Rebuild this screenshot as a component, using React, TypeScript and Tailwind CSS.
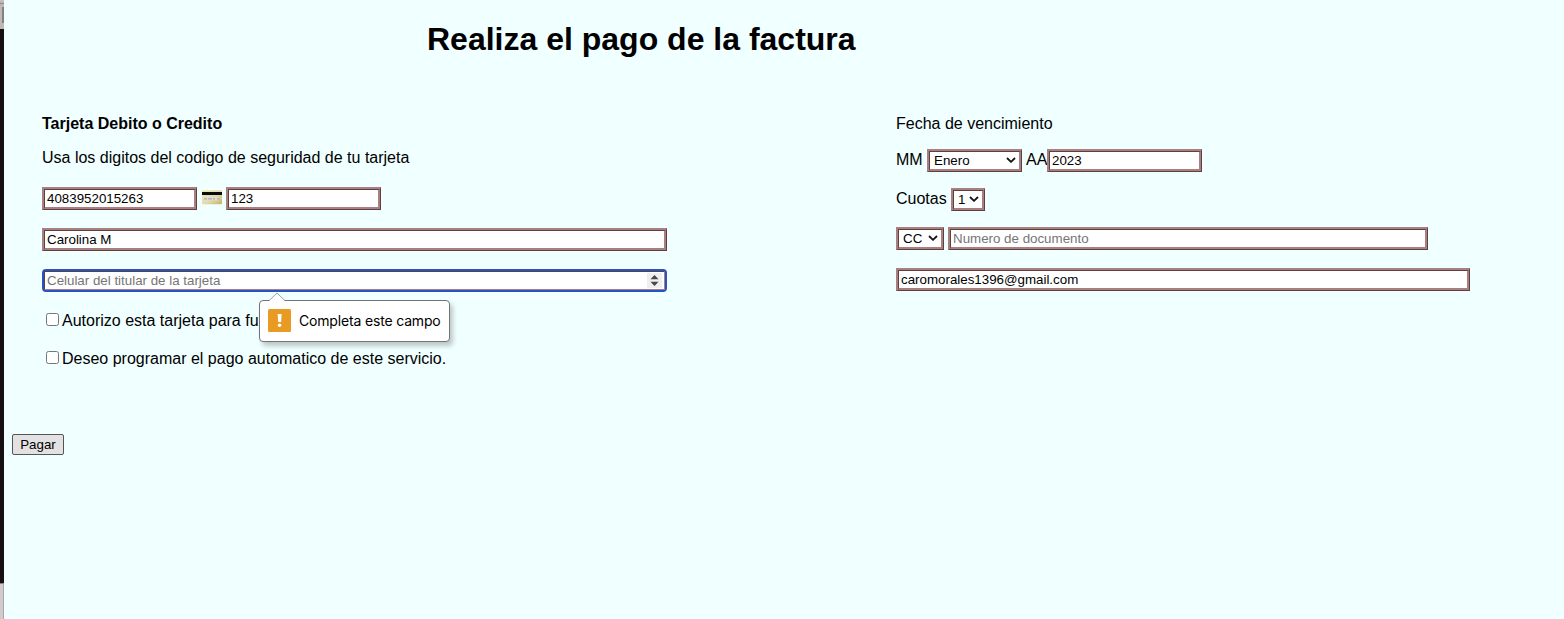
import type { ReactNode } from "react";

function Field({ className, children }: { className: string; children?: ReactNode }) {
  return (
    <div
      className={`h-[23px] shrink-0 border-t-2 border-l-2 border-r border-b border-t-[#a97f7f] border-l-[#a97f7f] border-r-[#5d4141] border-b-[#5d4141] ${className}`}
    >
      <div className="flex h-full items-center border-t border-l border-r-2 border-b-2 border-t-[#5d4141] border-l-[#5d4141] border-r-[#a97f7f] border-b-[#a97f7f] bg-white pl-[2px] text-[13.33px] leading-[15px] whitespace-nowrap">
        {children}
      </div>
    </div>
  );
}

function Chevron() {
  return (
    <svg className="-mt-px h-[6px] w-[10px] shrink-0" viewBox="0 0 10 6" fill="none" stroke="#111" strokeWidth="1.8">
      <path d="M1 1 L5 4.8 L9 1" />
    </svg>
  );
}

function CardIcon() {
  return (
    <svg className="h-[15px] w-[20px]" viewBox="0 0 20 15">
      <defs>
        <linearGradient id="card" x1="0" y1="0" x2="1" y2="1">
          <stop offset="0" stopColor="#f1e6b4" />
          <stop offset="0.55" stopColor="#e6dbaa" />
          <stop offset="1" stopColor="#c9b16c" />
        </linearGradient>
      </defs>
      <rect width="20" height="14" y="0.2" rx="0.8" fill="url(#card)" />
      <rect width="20" height="3" y="2" fill="#0b0b0b" />
      <rect x="1.5" y="7" width="15" height="3.4" fill="#dedfd3" />
      <path d="M2 8.8h3M6 8.8h4M11 8.8h2M15 8.8h2" stroke="#a5adc0" strokeWidth="1.2" />
    </svg>
  );
}

function Check() {
  return <span className="mr-[3px] mb-[2px] ml-[4px] size-[13px] shrink-0 rounded-[2.5px] border border-[#767676] bg-white" />;
}

export default function App() {
  return (
    <div className="flex h-[619px] w-[1564px] overflow-hidden bg-[#f0ffff] font-['Liberation_Sans',Arial,sans-serif] text-[16px] leading-[18px] text-black">
      <div className="flex w-1 shrink-0 flex-col bg-[#141011]">
        <div className="flex h-[29px] flex-col items-end border-t border-[#c9c5c1] bg-[#bdb9b5]">
          <div className="mt-[2px] h-px w-full bg-[#8d8987]" />
          <div className="mt-[3px] h-4 w-[2px] bg-[#858183]" />
        </div>
        <div className="grow" />
        <div className="h-9 border-t border-r border-t-[#858183] border-r-[#aaa7a7] bg-[#cfcccb]" />
      </div>
      <div className="flex grow flex-col">
        <h1 className="mt-[21px] ml-[423px] h-[38px] text-[32px] leading-[37px] font-bold whitespace-nowrap">
          Realiza el pago de la factura
        </h1>
        <div className="mt-[56px] flex h-[319px] pl-[38px]">
          <section className="w-[854px] shrink-0">
            <h2 className="h-[18px] font-bold">Tarjeta Debito o Credito</h2>
            <p className="mt-4 h-[18px]">Usa los digitos del codigo de seguridad de tu tarjeta</p>
            <div className="mt-5 flex">
              <Field className="w-[155px]">4083952015263</Field>
              <div className="ml-[5px] w-[20px] pt-[3px]"><CardIcon /></div>
              <Field className="ml-1 w-[155px]">123</Field>
            </div>
            <Field className="mt-[18px] w-[625px]">Carolina M</Field>
            <div className="relative mt-[18px] h-[23px] w-[625px] rounded-[4px] border-2 border-[#2753c4] bg-[#2753c4]">
              <div className="flex h-[19px] items-center justify-between border border-t-[#5d4141] border-l-[#5d4141] border-r-[#a97f7f] border-b-[#a97f7f] bg-white pr-[2px] pl-[2px] text-[13.33px] leading-[15px] text-[#757575]">
                <span>Celular del titular de la tarjeta</span>
                <svg className="h-[15px] w-[15px]" viewBox="0 0 15 15">
                  <rect width="15" height="15" fill="#efefef" />
                  <path d="M3.5 6.3 7.5 2 11.5 6.3ZM3.5 8.7h8L7.5 13Z" fill="#484848" />
                </svg>
              </div>
              <div className="absolute top-[29px] left-[215px] flex h-[42px] w-[191px] items-center rounded-[4px] border border-[#747474] bg-white pl-[8px] shadow-[3px_4px_5px_rgba(0,0,0,0.22)]">
                <svg className="absolute -top-[9px] left-[8px] h-[10px] w-[18px]" viewBox="0 0 18 10">
                  <path d="M1 9 9 1 17 9V10H1Z" fill="white" />
                  <path d="M1 8.7 9 1 17 8.7" fill="none" stroke="#a0a0a0" />
                </svg>
                <svg className="-mt-px h-[23px] w-[23px] shrink-0" viewBox="0 0 23 23">
                  <rect width="23" height="23" rx="1.5" fill="#e99a22" />
                  <path d="M9.6 5h4l-.5 8h-3Z" fill="white" />
                  <circle cx="11.6" cy="16.2" r="1.8" fill="white" />
                </svg>
                <span className="ml-2 font-[Inter,sans-serif] text-[14px] leading-4 tracking-[-0.17px] whitespace-nowrap">Completa este campo</span>
              </div>
            </div>
            <div className="mt-[19px] flex h-[19px] items-center">
              <Check />
              <span>Autorizo esta tarjeta para fu</span>
            </div>
            <div className="mt-[19px] flex h-[19px] items-center">
              <Check />
              <span>Deseo programar el pago automatico de este servicio.</span>
            </div>
          </section>
          <section className="w-[600px]">
            <p className="h-[18px]">Fecha de vencimiento</p>
            <div className="mt-4 flex">
              <span className="w-[31px] pt-[2px]">MM</span>
              <Field className="w-[95px]">
                <span className="ml-[2px] w-[72px]">Enero</span>
                <Chevron />
              </Field>
              <span className="ml-[4px] w-[21px] pt-[2px]">AA</span>
              <Field className="w-[155px]">2023</Field>
            </div>
            <div className="mt-[16px] flex">
              <span className="w-[55px] pt-[2px]">Cuotas</span>
              <Field className="w-[34px]">
                <span className="ml-[2px] w-[11px]">1</span>
                <Chevron />
              </Field>
            </div>
            <div className="mt-4 flex gap-1">
              <Field className="w-[48px]">
                <span className="ml-[2px] w-[25px]">CC</span>
                <Chevron />
              </Field>
              <Field className="w-[480px]">
                <span className="text-[#757575]">Numero de documento</span>
              </Field>
            </div>
            <Field className="mt-[18px] w-[574px]">caromorales1396@gmail.com</Field>
          </section>
        </div>
        <button className="ml-2 h-[21px] w-[52px] rounded-[2px] border border-[#555] bg-[#e3e1e2] text-[13.33px] leading-[15px]">
          Pagar
        </button>
      </div>
    </div>
  );
}
